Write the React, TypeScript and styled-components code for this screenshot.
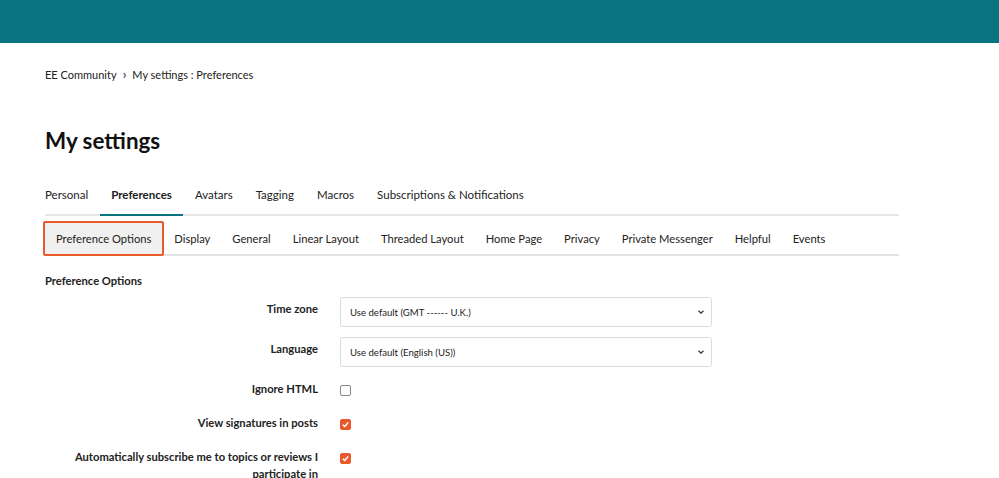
import styled, { createGlobalStyle } from "styled-components";

const GlobalStyle = createGlobalStyle`
  body {
    margin: 0;
    background: #fff;
    font-family: Lato, "Noto Sans", Arial, sans-serif;
    color: #1d1d1d;
  }
`;

const mainTabs = ["Personal", "Preferences", "Avatars", "Tagging", "Macros", "Subscriptions & Notifications"];
const subTabs = [
  "Preference Options",
  "Display",
  "General",
  "Linear Layout",
  "Threaded Layout",
  "Home Page",
  "Privacy",
  "Private Messenger",
  "Helpful",
  "Events",
];

const Chevron = () => (
  <svg width="8" height="8" viewBox="0 0 8 8">
    <path d="M1.5 2.8 L4 5.2 L6.5 2.8" fill="none" stroke="#333" strokeWidth="1.2" />
  </svg>
);

const Check = () => (
  <svg width="9" height="9" viewBox="0 0 10 10">
    <path d="M2 5.2 L4.2 7.3 L8 2.8" fill="none" stroke="#fff" strokeWidth="1.6" />
  </svg>
);

export default function App() {
  return (
    <>
      <GlobalStyle />
      <Header />
      <Page>
        <Breadcrumb>
          <span>EE Community</span>
          <Sep>›</Sep>
          <span>My settings : Preferences</span>
        </Breadcrumb>
        <Title>My settings</Title>
        <TabBar>
          {mainTabs.map((t) => (
            <Tab key={t} $active={t === "Preferences"}>
              {t}
            </Tab>
          ))}
        </TabBar>
        <SubTabBar>
          {subTabs.map((t) => (
            <SubTab key={t} $active={t === "Preference Options"}>
              {t}
            </SubTab>
          ))}
        </SubTabBar>
        <SectionTitle>Preference Options</SectionTitle>
        <Form>
          <Label>Time zone</Label>
          <Select>
            <span>Use default (GMT ------ U.K.)</span>
            <Chevron />
          </Select>
          <Label>Language</Label>
          <Select>
            <span>Use default (English (US))</span>
            <Chevron />
          </Select>
          <Label>Ignore HTML</Label>
          <CheckCell>
            <Box />
          </CheckCell>
          <Label>View signatures in posts</Label>
          <CheckCell>
            <Box $checked>
              <Check />
            </Box>
          </CheckCell>
          <Label>
            Automatically subscribe me to topics or reviews I
            <br />
            participate in
          </Label>
          <CheckCell>
            <Box $checked>
              <Check />
            </Box>
          </CheckCell>
        </Form>
      </Page>
    </>
  );
}

const Header = styled.header`
  height: 43px;
  background: #077480;
`;

const Page = styled.main`
  width: 854px;
  padding: 24px 0 0 45px;
`;

const Breadcrumb = styled.nav`
  display: flex;
  align-items: center;
  gap: 6px;
  font-size: 11px;
  color: #222;
  height: 14px;
  white-space: nowrap;
`;

const Sep = styled.span`
  font-size: 13px;
`;

const Title = styled.h1`
  margin: 44px 0 0;
  font-size: 22.4px;
  font-weight: 700;
  line-height: 32px;
  color: #111;
`;

const TabBar = styled.div`
  display: flex;
  margin-top: 24px;
  border-bottom: 2px solid #e6e6e6;
`;

const Tab = styled.div<{ $active?: boolean }>`
  padding: 6px 11.5px 12px;
  font-size: 11.5px;
  line-height: 15px;
  white-space: nowrap;
  font-weight: ${({ $active }) => ($active ? 700 : 400)};
  color: #222;
  margin-bottom: -2px;
  border-bottom: 2px solid ${({ $active }) => ($active ? "#077480" : "transparent")};
  &:first-child {
    padding-left: 0;
  }
`;

const SubTabBar = styled.div`
  display: flex;
  align-items: flex-start;
  height: 40px;
  padding-top: 5px;
  box-sizing: border-box;
  border-bottom: 2px solid #e3e3e3;
`;

const SubTab = styled.div<{ $active?: boolean }>`
  height: 35px;
  display: flex;
  align-items: center;
  padding: ${({ $active }) => ($active ? "0 11px" : "0 11px")};
  font-size: 11.2px;
  white-space: nowrap;
  color: #222;
  box-sizing: border-box;
  background: ${({ $active }) => ($active ? "#f0f0f0" : "transparent")};
  border: ${({ $active }) => ($active ? "2px solid #e85a2c" : "none")};
  border-radius: 2px;
  &:first-child {
    margin-left: -2px;
    margin-right: -1px;
  }
`;

const SectionTitle = styled.h2`
  margin: 17px 0 0;
  font-size: 11.2px;
  line-height: 16px;
  font-weight: 700;
  color: #222;
`;

const Form = styled.div`
  display: grid;
  grid-template-columns: 273px 372px;
  column-gap: 22px;
  row-gap: 10px;
  margin-top: 8px;
  align-items: start;
`;

const Label = styled.div`
  text-align: right;
  font-size: 11.2px;
  font-weight: 700;
  line-height: 17px;
  padding: 3px 0 4px;
  white-space: nowrap;
  color: #222;
`;

const Select = styled.div`
  height: 30px;
  box-sizing: border-box;
  border: 1px solid #dcdcdc;
  border-radius: 3px;
  display: flex;
  align-items: center;
  justify-content: space-between;
  padding: 0 6px 0 9px;
  font-size: 9.6px;
  color: #222;
`;

const CheckCell = styled.div`
  height: 24px;
  box-sizing: border-box;
  display: flex;
  align-items: center;
  padding-top: 2px;
`;

const Box = styled.div<{ $checked?: boolean }>`
  width: 11px;
  height: 11px;
  border-radius: 2px;
  box-sizing: border-box;
  display: flex;
  align-items: center;
  justify-content: center;
  background: ${({ $checked }) => ($checked ? "#e85a2c" : "#fff")};
  border: 1px solid ${({ $checked }) => ($checked ? "#e85a2c" : "#888")};
`;
